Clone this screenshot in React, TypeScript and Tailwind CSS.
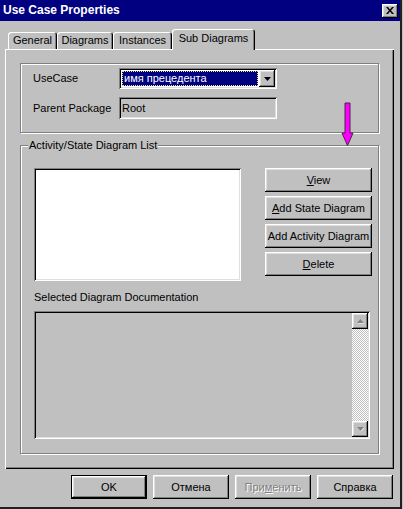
import React from 'react';

const raised =
  'shadow-[inset_-1px_-1px_0_#000,inset_1px_1px_0_#fff,inset_-2px_-2px_0_#808080,inset_2px_2px_0_#dfdfdf]';
const sunken =
  'shadow-[inset_1px_1px_0_#808080,inset_-1px_-1px_0_#fff,inset_2px_2px_0_#000,inset_-2px_-2px_0_#dfdfdf]';
const etched = 'border border-[#808080] shadow-[inset_1px_1px_0_#fff,1px_1px_0_#fff]';

function Tab({ label, width, active }: { label: string; width: number; active?: boolean }) {
  return (
    <div
      style={{ width }}
      className={
        'flex items-center justify-center rounded-t-[3px] bg-[#c0c0c0] shadow-[inset_1px_1px_0_#fff,inset_-1px_0_0_#000,inset_-2px_0_0_#808080] ' +
        (active ? 'relative z-10 h-[21px] mb-[-1px] pb-[3px]' : 'h-[17px]')
      }
    >
      {label}
    </div>
  );
}

function Btn({ children, className = '' }: { children: React.ReactNode; className?: string }) {
  return (
    <div className={`flex h-[24px] w-[107px] items-center justify-center bg-[#c0c0c0] ${raised} ${className}`}>
      {children}
    </div>
  );
}

function ScrollArrow({ up }: { up?: boolean }) {
  return (
    <div className={`flex h-[16px] w-[16px] items-center justify-center bg-[#c0c0c0] ${raised}`}>
      <svg width="9" height="6" viewBox="0 0 9 6">
        <polygon points={up ? '1.5,5.5 8.5,5.5 5,1.5' : '1.5,1.5 8.5,1.5 5,5.5'} fill="#fff" />
        <polygon points={up ? '1,5 8,5 4.5,1' : '1,1 8,1 4.5,5'} fill="#808080" />
      </svg>
    </div>
  );
}

export default function App() {
  return (
    <div className="h-[509px] w-[403px] bg-[#c0c0c0] font-['Liberation_Sans',Arial,sans-serif] text-[11px] leading-[13px] text-black">
      <div className="h-[509px] w-[402px] border-r-2 border-b-2 border-[#202020]">
        {/* Title bar */}
        <div className="flex h-[21px] items-center justify-between bg-[#000080] pl-[3px] pr-[2px]">
          <span className="text-[12px] font-bold text-white">Use Case Properties</span>
          <div className={`flex h-[14px] w-[16px] items-center justify-center bg-[#c0c0c0] ${raised}`}>
            <svg width="8" height="7" viewBox="0 0 8 7">
              <path d="M0 0h2l2 2.5L6 0h2L5 3.5 8 7H6L4 4.5 2 7H0l3-3.5z" fill="#000" />
            </svg>
          </div>
        </div>

        {/* Tabs */}
        <div className="flex h-[20px] items-end pl-[8px] mt-[8px]">
          <Tab label="General" width={49} />
          <Tab label="Diagrams" width={56} />
          <Tab label="Instances" width={59} />
          <Tab label="Sub Diagrams" width={83} active />
        </div>

        {/* Tab panel */}
        <div className="relative ml-[5px] h-[420px] w-[389px] bg-[#c0c0c0] px-[15px] pt-[14px] shadow-[inset_1px_1px_0_#fff,inset_-1px_-1px_0_#000,inset_-2px_-2px_0_#808080]">
          {/* Use case group */}
          <div className={`h-[70px] pl-[12px] pt-[4px] ${etched}`}>
            <div className="flex h-[21px] items-center">
              <span className="w-[86px]">UseCase</span>
              <div className={`flex h-[21px] w-[158px] items-center bg-white p-[2px] ${sunken}`}>
                <div className="flex h-full flex-1 items-center p-[1px]">
                  <div className="flex h-full flex-1 items-center border border-dotted border-[#e8e880] bg-[#000080] pl-[1px] text-white">
                    имя прецедента
                  </div>
                </div>
                <div className={`flex h-[17px] w-[16px] items-center justify-center bg-[#c0c0c0] ${raised}`}>
                  <svg width="7" height="4" viewBox="0 0 7 4">
                    <polygon points="0,0 7,0 3.5,4" fill="#000" />
                  </svg>
                </div>
              </div>
            </div>
            <div className="mt-[8px] flex h-[22px] items-center">
              <span className="w-[86px]">Parent Package</span>
              <div className={`flex h-[22px] w-[158px] items-center bg-[#c0c0c0] pl-[3px] ${sunken}`}>Root</div>
            </div>
          </div>

          {/* Diagram list group */}
          <div className={`relative mt-[12px] h-[309px] pl-[13px] pt-[22px] ${etched}`}>
            <span className="absolute left-[7px] top-[-7px] bg-[#c0c0c0] px-[1px]">Activity/State Diagram List</span>
            <div className="flex">
              <div className={`h-[113px] w-[207px] bg-white ${sunken}`} />
              <div className="ml-[24px] flex flex-col gap-[4px]">
                <Btn>
                  <span>
                    <span className="underline">V</span>iew
                  </span>
                </Btn>
                <Btn>
                  <span>
                    <span className="underline">A</span>dd State Diagram
                  </span>
                </Btn>
                <Btn>Add Activity Diagram</Btn>
                <Btn>
                  <span>
                    <span className="underline">D</span>elete
                  </span>
                </Btn>
              </div>
            </div>
            <div className="mt-[10px]">Selected Diagram Documentation</div>
            <div className={`mt-[7px] flex h-[128px] w-[336px] bg-[#c0c0c0] p-[2px] ${sunken}`}>
              <div className="flex-1" />
              <div className="flex w-[16px] flex-col">
                <ScrollArrow up />
                <div className="flex-1 bg-[repeating-conic-gradient(#c0c0c0_0%_25%,#ffffff_0%_50%)] bg-[length:2px_2px]" />
                <ScrollArrow />
              </div>
            </div>
          </div>

          {/* Annotation arrow */}
          <svg className="absolute left-[336px] top-[53px]" width="13" height="45" viewBox="0 0 13 45">
            <polygon points="4,1 9,1 9,31 12,31 6.5,43.5 1,31 4,31" fill="#ff00ff" stroke="#502050" strokeWidth="1" />
          </svg>
        </div>

        {/* Dialog buttons */}
        <div className="ml-[71px] mt-[6px] flex gap-[6px]">
          <div className={`flex h-[24px] w-[76px] items-center justify-center border border-black bg-[#c0c0c0] ${raised}`}>OK</div>
          <div className={`flex h-[24px] w-[76px] items-center justify-center bg-[#c0c0c0] ${raised}`}>Отмена</div>
          <div className={`flex h-[24px] w-[76px] items-center justify-center bg-[#c0c0c0] text-[#808080] [text-shadow:1px_1px_0_#fff] ${raised}`}>
            <span>
              При<span className="underline">м</span>енить
            </span>
          </div>
          <div className={`flex h-[24px] w-[76px] items-center justify-center bg-[#c0c0c0] ${raised}`}>Справка</div>
        </div>
      </div>
    </div>
  );
}
